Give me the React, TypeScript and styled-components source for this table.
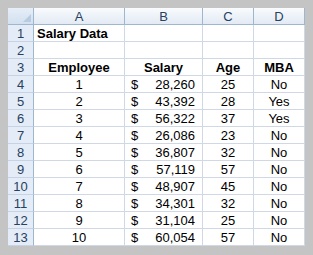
import styled, { createGlobalStyle } from 'styled-components'

const GlobalStyle = createGlobalStyle`
  html, body {
    margin: 0;
    padding: 0;
    background: #c4c4c4;
  }
  body {
    font-family: 'Liberation Sans', Arial, sans-serif;
  }
`

const rows: [number, number, number, string][] = [
  [1, 28260, 25, 'No'],
  [2, 43392, 28, 'Yes'],
  [3, 56322, 37, 'Yes'],
  [4, 26086, 23, 'No'],
  [5, 36807, 32, 'No'],
  [6, 57119, 57, 'No'],
  [7, 48907, 45, 'No'],
  [8, 34301, 32, 'No'],
  [9, 31104, 25, 'No'],
  [10, 60054, 57, 'No']
]

function App() {
  return (
    <>
      <GlobalStyle />
      <Frame>
        <Sheet>
          <Corner>
            <Triangle />
          </Corner>
          {['A', 'B', 'C', 'D'].map(c => (
            <ColHead key={c}>{c}</ColHead>
          ))}

          <RowHead>1</RowHead>
          <Cell $bold>Salary Data</Cell>
          <Cell />
          <Cell />
          <Cell />

          <RowHead>2</RowHead>
          <Cell />
          <Cell />
          <Cell />
          <Cell />

          <RowHead>3</RowHead>
          <Cell $bold $align="center">Employee</Cell>
          <Cell $bold $align="center">Salary</Cell>
          <Cell $bold $align="center">Age</Cell>
          <Cell $bold $align="center">MBA</Cell>

          {rows.map(([emp, salary, age, mba], i) => (
            <Row key={emp} index={i + 4} emp={emp} salary={salary} age={age} mba={mba} />
          ))}
        </Sheet>
      </Frame>
    </>
  )
}

type RowProps = {
  index: number
  emp: number
  salary: number
  age: number
  mba: string
}

function Row({ index, emp, salary, age, mba }: RowProps) {
  return (
    <>
      <RowHead>{index}</RowHead>
      <Cell $align="center">{emp}</Cell>
      <MoneyCell>
        <span>$</span>
        <span>{salary.toLocaleString('en-US')}</span>
      </MoneyCell>
      <Cell $align="center">{age}</Cell>
      <Cell $align="center">{mba}</Cell>
    </>
  )
}

export default App

const Frame = styled.div`
  width: 313px;
  height: 255px;
  padding: 8px 0 0 8px;
  box-sizing: border-box;
  background: #c4c4c4;
`

const Sheet = styled.div`
  display: grid;
  grid-template-columns: 26px 91px 78px 51px 51px;
  grid-template-rows: repeat(14, 17px);
  width: 297px;
  background: #fff;
  font-size: 13px;
  color: #000;
`

const Corner = styled.div`
  position: relative;
  box-sizing: border-box;
  border-right: 1px solid #9eb6ce;
  border-bottom: 1px solid #9eb6ce;
  background: linear-gradient(#e6eef8, #d3e0f0);
`

const Triangle = styled.div`
  position: absolute;
  right: 2px;
  bottom: 2px;
  width: 0;
  height: 0;
  border-left: 8px solid transparent;
  border-bottom: 8px solid #b9cbe0;
`

const ColHead = styled.div`
  box-sizing: border-box;
  border-right: 1px solid #9eb6ce;
  border-bottom: 1px solid #9eb6ce;
  background: linear-gradient(#f9fbfd, #e2eaf4);
  color: #27415f;
  text-align: center;
  line-height: 16px;
  padding-top: 1px;
`

const RowHead = styled.div`
  box-sizing: border-box;
  border-right: 1px solid #9eb6ce;
  border-bottom: 1px solid #c5d3e4;
  background: #e4ecf7;
  color: #27415f;
  text-align: center;
  line-height: 16px;
  padding-top: 1px;
`

const Cell = styled.div<{ $bold?: boolean; $align?: 'left' | 'center' }>`
  box-sizing: border-box;
  border-right: 1px solid #d0d7e5;
  border-bottom: 1px solid #d0d7e5;
  padding: 1px 3px 0;
  line-height: 16px;
  white-space: nowrap;
  font-weight: ${p => (p.$bold ? 700 : 400)};
  text-align: ${p => p.$align ?? 'left'};
`

const MoneyCell = styled.div`
  display: flex;
  justify-content: space-between;
  box-sizing: border-box;
  border-right: 1px solid #d0d7e5;
  border-bottom: 1px solid #d0d7e5;
  padding: 1px 7px 0 6px;
  line-height: 16px;
  white-space: nowrap;
`
